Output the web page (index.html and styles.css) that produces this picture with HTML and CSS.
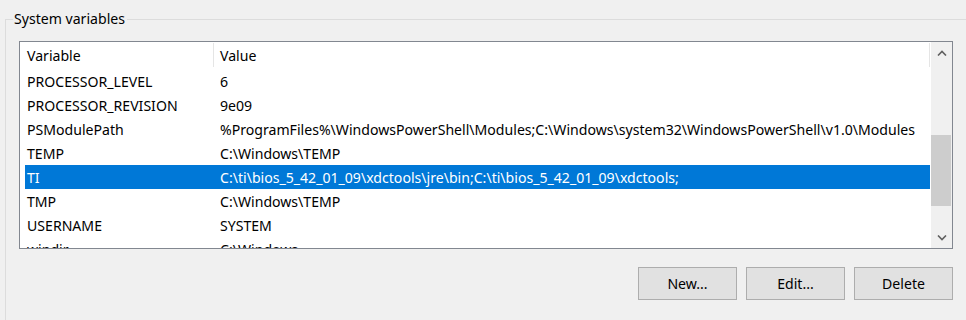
FILE: index.html
```html
<!DOCTYPE html>
<html lang="en">
<head>
    <meta charset="UTF-8">
    <title>System variables</title>
    <link rel="stylesheet" href="styles.css">
</head>
<body>
    <fieldset class="group">
        <legend>System variables</legend>
        <div class="list-box">
            <div class="list-main">
                <div class="list-header">
                    <div class="head-cell name-col">Variable</div>
                    <div class="head-cell value-col">Value</div>
                </div>
                <div class="row">
                    <div class="cell name-col">PROCESSOR_LEVEL</div>
                    <div class="cell value-col">6</div>
                </div>
                <div class="row">
                    <div class="cell name-col">PROCESSOR_REVISION</div>
                    <div class="cell value-col">9e09</div>
                </div>
                <div class="row">
                    <div class="cell name-col">PSModulePath</div>
                    <div class="cell value-col">%ProgramFiles%\WindowsPowerShell\Modules;C:\Windows\system32\WindowsPowerShell\v1.0\Modules</div>
                </div>
                <div class="row">
                    <div class="cell name-col">TEMP</div>
                    <div class="cell value-col">C:\Windows\TEMP</div>
                </div>
                <div class="row selected">
                    <div class="cell name-col">TI</div>
                    <div class="cell value-col">C:\ti\bios_5_42_01_09\xdctools\jre\bin;C:\ti\bios_5_42_01_09\xdctools;</div>
                </div>
                <div class="row">
                    <div class="cell name-col">TMP</div>
                    <div class="cell value-col">C:\Windows\TEMP</div>
                </div>
                <div class="row">
                    <div class="cell name-col">USERNAME</div>
                    <div class="cell value-col">SYSTEM</div>
                </div>
                <div class="row">
                    <div class="cell name-col">windir</div>
                    <div class="cell value-col">C:\Windows</div>
                </div>
            </div>
            <div class="scrollbar">
                <div class="arrow">
                    <svg width="10" height="6" viewBox="0 0 10 6"><polyline points="1,5.5 5,1.5 9,5.5" fill="none" stroke="#606060" stroke-width="1.6"/></svg>
                </div>
                <div class="track">
                    <div class="thumb" style="margin-top: 72px; height: 71px;"></div>
                </div>
                <div class="arrow">
                    <svg width="10" height="6" viewBox="0 0 10 6"><polyline points="1,0.5 5,4.5 9,0.5" fill="none" stroke="#606060" stroke-width="1.6"/></svg>
                </div>
            </div>
        </div>
        <div class="buttons">
            <button class="btn">New...</button>
            <button class="btn">Edit...</button>
            <button class="btn">Delete</button>
        </div>
    </fieldset>
</body>
</html>
```

FILE: styles.css
```css
body {
    margin: 0;
    background-color: #f0f0f0;
    color: #000000;
    font-family: "Noto Sans", "Open Sans", sans-serif;
    font-size: 14.1px;
    height: 320px;
    overflow: hidden;
}
.group {
    margin: 9px 0 0 5px;
    padding: 0 0 20px 13px;
    border: 1px solid #dcdcdc;
    border-right: none;
    border-bottom: none;
    min-width: 0;
}
.group legend {
    margin-left: -6px;
    padding: 0 2px 0 1px;
    line-height: 20px;
    height: 20px;
}
.list-box {
    margin-top: 12px;
    width: 932px;
    height: 206px;
    border: 1px solid #828790;
    background: #ffffff;
    display: flex;
}
.list-main {
    width: 911px;
    overflow: hidden;
}
.list-header {
    display: flex;
    height: 27px;
    padding: 1px 0 2px;
    box-sizing: border-box;
    width: 910px;
}
.head-cell {
    line-height: 22px;
    padding-top: 2px;
}
.head-cell.name-col {
    width: 193px;
    padding-left: 7px;
    box-sizing: border-box;
}
.head-cell.value-col {
    flex: 1;
    padding-left: 6px;
    border-left: 1px solid #e5e5e5;
    border-right: 1px solid #e5e5e5;
}
.row {
    display: flex;
    height: 24px;
    margin-left: 5px;
    width: 905px;
    line-height: 23px;
    padding-top: 1px;
    box-sizing: border-box;
    white-space: nowrap;
}
.row.selected {
    background: #0078d7;
    color: #ffffff;
}
.cell.name-col {
    width: 188px;
    padding-left: 2px;
    box-sizing: border-box;
}
.cell.value-col {
    padding-left: 7px;
}
.scrollbar {
    width: 21px;
    background: #f0f0f0;
    display: flex;
    flex-direction: column;
}
.arrow {
    height: 21px;
    display: flex;
    align-items: center;
    justify-content: center;
}
.track {
    flex: 1;
}
.thumb {
    width: 20px;
    background: #cdcdcd;
}
.buttons {
    display: flex;
    justify-content: flex-end;
    gap: 9px;
    width: 934px;
    margin-top: 18px;
}
.btn {
    width: 99px;
    height: 33px;
    background: #e1e1e1;
    border: 1px solid #adadad;
    border-radius: 0;
    font-family: inherit;
    font-size: 14.1px;
    color: #000000;
    padding: 0;
}
```
